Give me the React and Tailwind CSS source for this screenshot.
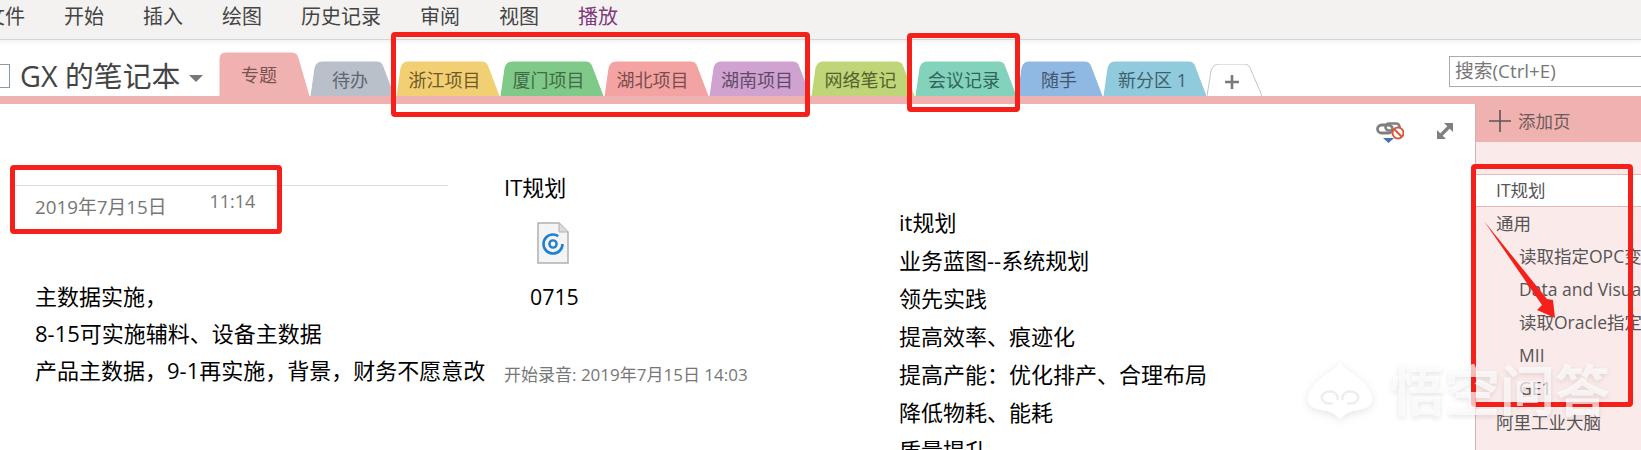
const menus = ['文件', '开始', '插入', '绘图', '历史记录', '审阅', '视图'];

// widths are read off the screenshot, text colour is a dark tint of each tab
const tabs = [
    { label: '专题', w: 91, h: 44, fill: '#f0b1b1', box: 'w-[91px] h-[44px] text-[#7a5252] pr-[11px] pt-[2px]', first: true },
    { label: '待办', w: 85, h: 35, fill: '#b9c0c9', box: 'w-[85px] h-[35px] text-[#5e6670] pr-[5px] pt-[3px]' },
    { label: '浙江项目', w: 104, h: 35, fill: '#f3cf73', box: 'w-[104px] h-[35px] text-[#6e5a2a] pr-[7px] pt-[3px] ml-px' },
    { label: '厦门项目', w: 104, h: 35, fill: '#7fca88', box: 'w-[104px] h-[35px] text-[#3f6b47] pr-[7px] pt-[3px]' },
    { label: '湖北项目', w: 105, h: 35, fill: '#f4a3a3', box: 'w-[105px] h-[35px] text-[#7a4c4c] pr-[8px] pt-[3px]' },
    { label: '湖南项目', w: 102, h: 35, fill: '#cfa2d0', box: 'w-[102px] h-[35px] text-[#5f4a68] pr-[6px] pt-[3px]' },
    { label: '网络笔记', w: 104, h: 35, fill: '#bed678', box: 'w-[104px] h-[35px] text-[#55622e] pr-[5px] pt-[3px]' },
    { label: '会议记录', w: 102, h: 35, fill: '#82d2bc', box: 'w-[102px] h-[35px] text-[#2f6658] pr-[4px] pt-[3px]' },
    { label: '随手', w: 86, h: 35, fill: '#8fb8e2', box: 'w-[86px] h-[35px] text-[#44566c] pr-[2px] pt-[3px]' },
    { label: '新分区 1', w: 104, h: 35, fill: '#8fcbdd', box: 'w-[104px] h-[35px] text-[#3f5f6b] pr-[5px] pt-[3px]' },
];

const pages = [
    { label: '读取指定OPC变量', sub: true },
    { label: 'Data and Visualization', sub: true },
    { label: '读取Oracle指定', sub: true },
    { label: 'MII', sub: true },
    { label: 'GE1', sub: true },
    { label: '阿里工业大脑', sub: false },
];

const plan = ['it规划', '业务蓝图--系统规划', '领先实践', '提高效率、痕迹化', '提高产能：优化排产、合理布局', '降低物耗、能耗', '质量提升'];

const tabPath = (w, h, first) => {
    const left = first ? `M0 ${h} L0 7 Q0 0 7 0` : `M0 ${h} L4 7 Q6 0 12 0`;
    return `${left} L${w - 18} 0 Q${w - 13} 0 ${w - 11} 6 L${w} ${h}`;
};

const Tab = ({ label, w, h, fill, box, first }) => (
    <div className={`relative flex items-center justify-center shrink-0 text-[18px] ${box}`}>
        <svg className="absolute inset-0" width={w} height={h} viewBox={`0 0 ${w} ${h}`}>
            <path d={tabPath(w, h, first)} fill={fill} stroke="#ffffff" strokeWidth="1" />
        </svg>
        <span className="relative whitespace-nowrap">{label}</span>
    </div>
);

const AddTab = () => (
    <div className="relative flex items-center justify-center shrink-0 w-[55px] h-[32px] pr-[6px] pt-[3px]">
        <svg className="absolute inset-0" width="55" height="32" viewBox="0 0 55 32">
            <path d={tabPath(55, 32)} fill="#ffffff" stroke="#c4c4c4" strokeWidth="1" />
        </svg>
        <svg className="relative" width="14" height="14" viewBox="0 0 14 14">
            <path d="M7 0v14M0 7h14" stroke="#7a7a7a" strokeWidth="2.6" />
        </svg>
    </div>
);

const SyncIcon = () => (
    <svg width="28" height="22" viewBox="0 0 28 22" fill="none">
        <rect x="1.5" y="3" width="15" height="8" rx="4" stroke="#808080" strokeWidth="2.8" />
        <rect x="9.5" y="1.5" width="14" height="7" rx="3.5" stroke="#808080" strokeWidth="2.6" />
        <circle cx="22" cy="11" r="5.5" fill="#ffffff" stroke="#d9583b" strokeWidth="2" />
        <path d="M18 7l8 8" stroke="#d9583b" strokeWidth="2" />
        <path d="M7 16h11l-5.5 5z" fill="#3f74b0" />
    </svg>
);

const ExpandIcon = () => (
    <svg width="18" height="18" viewBox="0 0 18 18" fill="none">
        <path d="M4 14L14 4" stroke="#808080" strokeWidth="3.4" />
        <path d="M8 1h9v9z" fill="#808080" />
        <path d="M1 8v9h9z" fill="#808080" />
    </svg>
);

const AudioFileIcon = () => (
    <svg width="32" height="42" viewBox="0 0 32 42" fill="none">
        <path d="M1 1h21l9 9v31H1z" fill="#f4f4f4" stroke="#b0b0b0" strokeWidth="1.5" />
        <path d="M22 1v9h9" fill="#dcdcdc" stroke="#b0b0b0" strokeWidth="1" />
        <circle cx="16" cy="22" r="9.5" stroke="#1f7fd0" strokeWidth="2.6" strokeDasharray="50 10" />
        <circle cx="16" cy="22" r="3.6" stroke="#1f7fd0" strokeWidth="2.4" />
    </svg>
);

const WatermarkLogo = () => (
    <svg className="[filter:drop-shadow(0_2px_4px_rgba(0,0,0,0.1))]" width="66" height="57" viewBox="0 0 66 57">
        <path d="M33 0C38 10 58 14 65 34C67 44 58 47 52 48C46 49 40 50 33 57C26 50 20 49 14 48C8 47 -1 44 1 34C8 14 28 10 33 0Z" fill="#ffffff" />
        <path d="M30 38a8 6 0 1 0-4 3M36 38a8 6 0 1 1 4 3" fill="none" stroke="#eeeeee" strokeWidth="2.5" />
    </svg>
);

const App = () => {
    return (
        <div className="relative w-full h-screen overflow-hidden bg-white text-black [font-family:'Open_Sans','Noto_Sans_CJK_SC',sans-serif]">
            {/* ribbon menu */}
            <div className="flex items-center gap-[39px] h-[40px] pb-[5px] -ml-[15px] pl-0 w-[calc(100%+15px)] bg-[#f3f2f1] border-b border-[#d6d4d4] shadow-[0_2px_4px_rgba(0,0,0,0.06)] text-[20px] text-[#444444] whitespace-nowrap">
                {menus.map((m) => (
                    <span key={m}>{m}</span>
                ))}
                <span className="text-[#80397b]">播放</span>
            </div>

            {/* notebook name, section tabs, search */}
            <div className="flex items-end h-[56px]">
                <div className="flex items-center self-start w-[219px] shrink-0 h-[56px] pt-[16px] text-[#444444]">
                    <div className="w-[10px] h-[24px] shrink-0 border border-l-0 border-[#8a9aa8]"></div>
                    <span className="ml-[10px] text-[28.8px] whitespace-nowrap">GX 的笔记本</span>
                    <div className="ml-[9px] mt-[4px] border-x-[7px] border-x-transparent border-t-[7px] border-t-[#777777]"></div>
                </div>
                {tabs.map((t) => (
                    <Tab key={t.label} {...t} />
                ))}
                <AddTab />
                <div className="self-start mt-[16px] ml-auto w-[192px] h-[31px] flex items-center pl-[5px] bg-white border border-r-0 border-[#aaaaaa] text-[18.8px] text-[#777777] whitespace-nowrap">
                    搜索(Ctrl+E)
                </div>
            </div>

            <div className="h-[8px] bg-[#f0b1b1]"></div>

            <div className="flex h-[346px] overflow-hidden">
                {/* page canvas */}
                <div className="flex-1 flex flex-col min-w-0">
                    <div className="flex justify-end items-start gap-[32px] h-[38px] pt-[18px] pr-[21px] shrink-0">
                        <SyncIcon />
                        <ExpandIcon />
                    </div>
                    <div className="flex text-[22px] leading-[37px]">
                        <div className="w-[504px] shrink-0 pt-[43px] pl-[15px]">
                            <div className="w-[433px] border-t border-[#dddddd] pt-[2px] pl-[20px] flex items-start text-[#767676] leading-[26px]">
                                <span className="pt-[6px] text-[18.8px] whitespace-nowrap">2019年7月15日</span>
                                <span className="ml-[43px] text-[18px]">11:14</span>
                            </div>
                            <div className="mt-[58px] pl-[20px] whitespace-nowrap">
                                <p>主数据实施，</p>
                                <p>8-15可实施辅料、设备主数据</p>
                                <p>产品主数据，9-1再实施，背景，财务不愿意改</p>
                            </div>
                        </div>
                        <div className="w-[395px] shrink-0 pt-[27px]">
                            <p>IT规划</p>
                            <div className="mt-[16px] ml-[33px]">
                                <AudioFileIcon />
                            </div>
                            <p className="mt-[14px] ml-[26px] text-[21.33px]">0715</p>
                            <p className="mt-[48px] text-[17px] leading-[24px] text-[#777777] whitespace-nowrap">开始录音: 2019年7月15日 14:03</p>
                        </div>
                        <div className="pt-[61px] leading-[38px] whitespace-nowrap">
                            {plan.map((line) => (
                                <p key={line}>{line}</p>
                            ))}
                        </div>
                    </div>
                </div>

                {/* page list */}
                <div className="w-[166px] shrink-0 flex flex-col bg-[#fbeaea] border-l border-[#d9b0b0] text-[17.5px] text-[#555555] whitespace-nowrap overflow-hidden">
                    <div className="flex items-center gap-[7px] h-[38px] shrink-0 -ml-px pl-[14px] pb-[4px] bg-[#f0b1b1] text-[#6e5c5c]">
                        <svg width="22" height="22" viewBox="0 0 22 22">
                            <path d="M11 0v22M0 11h22" stroke="#5e5454" strokeWidth="1.6" />
                        </svg>
                        <span>添加页</span>
                    </div>
                    <div className="mt-[32px] h-[33px] shrink-0 flex items-center pl-[20px] bg-white border-y border-[#e3b8b8]">IT规划</div>
                    <div className="h-[33px] shrink-0 flex items-center pl-[20px]">通用</div>
                    {pages.map((p) => (
                        <div key={p.label} className={p.sub ? 'h-[33px] shrink-0 flex items-center pl-[43px]' : 'h-[34px] shrink-0 flex items-center pl-[20px]'}>
                            {p.label}
                        </div>
                    ))}
                </div>
            </div>

            {/* red marks drawn on the screenshot */}
            <div className="absolute left-[391px] top-[32px] w-[419px] h-[85px] border-[5px] border-[#f5201a] rounded-[4px]"></div>
            <div className="absolute left-[907px] top-[33px] w-[113px] h-[79px] border-[5px] border-[#f5201a] rounded-[4px]"></div>
            <div className="absolute left-[10px] top-[165px] w-[272px] h-[69px] border-[5px] border-[#f5201a] rounded-[4px]"></div>
            <div className="absolute left-[1471px] top-[164px] w-[162px] h-[243px] border-[5px] border-[#f5201a] rounded-[4px]"></div>
            <svg className="absolute left-[1480px] top-[218px]" width="80" height="104" viewBox="1480 218 80 104">
                <polygon points="1484,221 1547,299 1553,300 1555,318 1537,310 1542,305" fill="#f5201a" />
            </svg>

            {/* watermark */}
            <div className="absolute left-[1307px] top-[360px] flex items-center gap-[17px]">
                <WatermarkLogo />
                <span className="text-[55px] leading-[60px] font-bold text-white/70 whitespace-nowrap [text-shadow:0_2px_5px_rgba(0,0,0,0.1)]">悟空问答</span>
            </div>
        </div>
    );
};

export default App;
